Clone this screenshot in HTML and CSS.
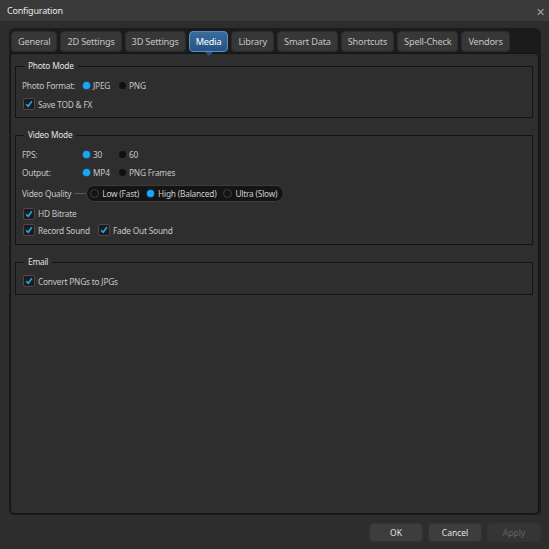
FILE: index.html
```html
<!DOCTYPE html>
<html>
<head>
  <link rel="stylesheet" href="styles.css">
</head>
<body>
  <div class="window">
    <div class="titlebar">
      <span class="title">Configuration</span>
      <span class="close">&#x2715;</span>
    </div>

    <div class="tabwidget">
      <div class="tabs">
        <div class="tab">General</div>
        <div class="tab">2D Settings</div>
        <div class="tab">3D Settings</div>
        <div class="tab active">Media</div>
        <div class="tab">Library</div>
        <div class="tab">Smart Data</div>
        <div class="tab">Shortcuts</div>
        <div class="tab">Spell-Check</div>
        <div class="tab">Vendors</div>
      </div>

      <div class="panel">
        <!-- Photo -->
        <fieldset class="group photo">
          <legend>Photo Mode</legend>
          <div class="row">
            <span class="field-label">Photo Format:</span>
            <span class="radio on">JPEG</span>
            <span class="radio">PNG</span>
          </div>
          <div class="row">
            <span class="check">Save TOD &amp; FX</span>
          </div>
        </fieldset>

        <!-- Video -->
        <fieldset class="group video">
          <legend>Video Mode</legend>
          <div class="row">
            <span class="field-label">FPS:</span>
            <span class="radio on">30</span>
            <span class="radio">60</span>
          </div>
          <div class="row">
            <span class="field-label">Output:</span>
            <span class="radio on">MP4</span>
            <span class="radio">PNG Frames</span>
          </div>
          <div class="row quality">
            <span class="field-label short">Video Quality</span>
            <span class="connector"></span>
            <div class="pill">
              <span class="seg">Low (Fast)</span>
              <span class="seg on">High (Balanced)</span>
              <span class="seg">Ultra (Slow)</span>
            </div>
          </div>
          <div class="row check-row hd">
            <span class="check">HD Bitrate</span>
          </div>
          <div class="row check-row sound">
            <span class="check">Record Sound</span>
            <span class="check">Fade Out Sound</span>
          </div>
        </fieldset>

        <!-- Email -->
        <fieldset class="group email">
          <legend>Email</legend>
          <div class="row">
            <span class="check">Convert PNGs to JPGs</span>
          </div>
        </fieldset>
      </div>
    </div>

    <div class="footer">
      <button class="btn">OK</button>
      <button class="btn">Cancel</button>
      <button class="btn" disabled>Apply</button>
    </div>
  </div>
</body>
</html>
```

FILE: styles.css
```css
/* dark configuration dialog */
html, body {
  margin: 0;
  padding: 0;
  background: #2d2d2d;
}

body {
  font-family: "Noto Sans", "Open Sans", sans-serif;
  font-size: 8.3px;
  letter-spacing: -0.2px;
  color: #c6c6c6;
}

.window {
  width: 549px;
  height: 549px;
  display: flex;
  flex-direction: column;
}

.titlebar {
  height: 21px;
  background: #3a3a3a;
  display: flex;
  align-items: center;
  justify-content: space-between;
  padding: 0 4px 0 7px;
  flex-shrink: 0;
}

.title {
  font-size: 9px;
  color: #e8e8e8;
}

.close {
  font-size: 11px;
  color: #a0a0a0;
  margin-top: 1px;
}

/* tab widget */
.tabwidget {
  margin: 7px 8px 0 9px;
  height: 487px;
  background: #1b1b1b;
  border-radius: 6px 6px 5px 5px;
  display: flex;
  flex-direction: column;
}

.tabs {
  display: flex;
  gap: 3px;
  padding: 3px 2px 0 2px;
  height: 21px;
}

.tab {
  flex: none;
  white-space: nowrap;
  height: 21px;
  box-sizing: border-box;
  padding: 0 6px;
  display: flex;
  align-items: center;
  background: #373737;
  border: 1px solid #2b2b2b;
  border-radius: 4px;
  font-size: 9.2px;
  color: #c4c4c4;
  position: relative;
}

.tab.active {
  background: linear-gradient(#3a6c9e, #245384);
  border-color: #5b8cc2;
  color: #ffffff;
}

.tab.active::after {
  content: "";
  position: absolute;
  left: 50%;
  bottom: -5px;
  margin-left: -4px;
  border-left: 4px solid transparent;
  border-right: 4px solid transparent;
  border-top: 4px solid #245384;
}

.panel {
  flex: 1;
  margin: 1px 2px 1px 1px;
  background: #2e2e2e;
  border: 1px solid #141414;
  border-radius: 4px;
  padding: 6px 5px 0 4px;
  display: flex;
  flex-direction: column;
  gap: 11px;
}

/* group boxes */
.group {
  margin: 0;
  border: 1px solid #141414;
  border-radius: 0;
  padding: 4px 6px 4px 6px;
  min-width: 0;
}

.group legend {
  padding: 0 4px;
  margin-left: 2px;
  color: #e2e2e2;
  line-height: 12px;
}

.row {
  display: flex;
  align-items: center;
  height: 18px;
  white-space: nowrap;
}

.photo .row + .row {
  margin-top: 1px;
}

.field-label {
  width: 60px;
  flex-shrink: 0;
}

.radio {
  width: 36px;
  display: flex;
  align-items: center;
  gap: 3px;
}

.radio::before {
  content: "";
  width: 7px;
  height: 7px;
  border-radius: 50%;
  background: #0f0f0f;
  flex-shrink: 0;
  margin-left: 1px;
}

.radio.on::before {
  background: #1aa8f5;
  box-shadow: 0 0 2px #1a8cd0;
}

.check {
  display: flex;
  align-items: center;
  gap: 3px;
  margin-left: 1px;
  margin-right: 7px;
}

.check::before {
  content: "";
  width: 10px;
  height: 10px;
  border: 1px solid #4a4a4a;
  border-radius: 2px;
  background: #1c1c1c url("data:image/svg+xml;utf8,<svg xmlns='http://www.w3.org/2000/svg' viewBox='0 0 10 10'><path d='M2.2 5.2 L4.2 7.3 L7.9 2.3' fill='none' stroke='%2320a8f0' stroke-width='1.6'/></svg>") center / 10px 10px no-repeat;
  flex-shrink: 0;
}

/* video group rows */
.video {
  padding-bottom: 6px;
}

.quality {
  height: 20px;
  margin-top: 2px;
}

.field-label.short {
  width: auto;
}

.connector {
  width: 12px;
  height: 1px;
  background: #5a5a5a;
  margin: 0 0 0 3px;
}

.pill {
  height: 17px;
  box-sizing: border-box;
  display: flex;
  align-items: center;
  gap: 7px;
  padding: 0 6px 0 3px;
  background: #141414;
  border: 1px solid #3c3c3c;
  border-radius: 9px;
}

.seg {
  display: flex;
  align-items: center;
  gap: 3px;
  color: #cfcfcf;
}

.seg::before {
  content: "";
  width: 9px;
  height: 9px;
  box-sizing: border-box;
  border-radius: 50%;
  border: 1px solid #3e3e3e;
  background: #141414;
}

.seg.on::before {
  width: 7px;
  height: 7px;
  margin: 0 1px;
  border: none;
  background: #1aa8f5;
  box-shadow: 0 0 2px #1a8cd0;
}

.hd {
  height: 17px;
  margin-top: 2px;
}

.sound {
  height: 16px;
}

/* footer */
.footer {
  display: flex;
  justify-content: flex-end;
  gap: 5px;
  padding: 8px 8px 0 0;
}

.btn {
  width: 54px;
  height: 19px;
  background: #3d3d3d;
  border: 1px solid #333333;
  border-radius: 4px;
  color: #e4e4e4;
  font-family: "Noto Sans", "Open Sans", sans-serif;
  font-size: 8.5px;
  padding: 0;
}

.btn:disabled {
  background: #353535;
  color: #636363;
}
```
